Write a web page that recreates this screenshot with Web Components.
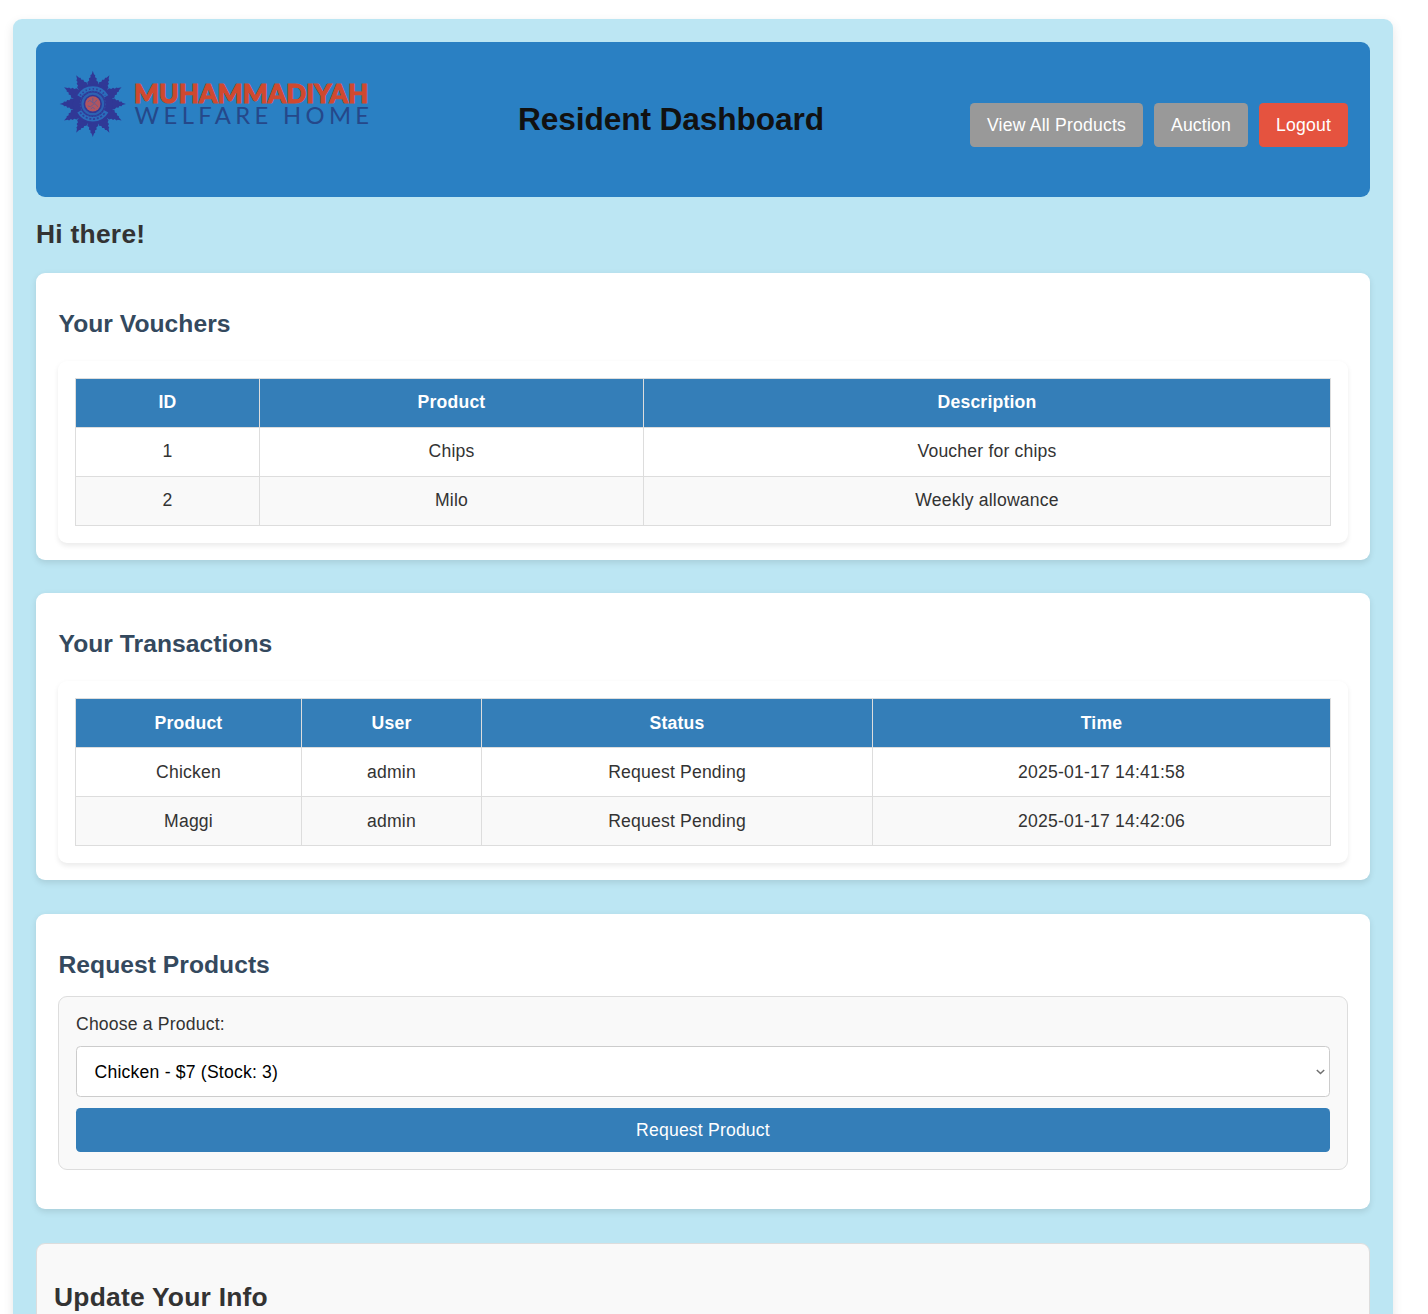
<!DOCTYPE html>
<html lang="en">
<head>
<meta charset="utf-8">
<title>Resident Dashboard</title>
<style>
html{overflow:hidden}
body{margin:0;padding:19px 35px 0 13px;background:#fff;color:#333;font:17.6px/1.15 "Liberation Sans",Arial,sans-serif;height:1314px;box-sizing:border-box;overflow:hidden}
</style>
</head>
<body>
<resident-dashboard></resident-dashboard>
<script>
function define(name, html, setup) {
  customElements.define(name, class extends HTMLElement {
    connectedCallback() {
      if (this.shadowRoot) return;
      this.attachShadow({ mode: 'open' }).innerHTML = html;
      if (setup) setup(this, this.shadowRoot);
    }
  });
}

define('brand-logo', `
<style>:host{display:block;width:314px;height:110px}svg{display:block}</style>
<svg width="314" height="110" viewBox="58 65 314 110" role="img">
  <g transform="translate(92.8 103.9)">
    <g class="rays" fill="#303896"></g>
    <circle r="20" fill="#303896"/>
    <g fill="none" stroke="#2b6dbb">
      <path d="M-13.5 -7.5A15.5 15.5 0 0 1 13.5 -7.5" stroke-width="4.6"/>
      <path d="M-13.5 7.5A15.5 15.5 0 0 0 13.5 7.5" stroke-width="4.6"/>
      <circle r="10.3" stroke="#2d62b2" stroke-width="2.2"/>
      <circle r="12.6" stroke="#2f55a8" stroke-width="1" stroke-dasharray="1.5 1.5"/>
    </g>
    <g fill="none" stroke="#303f9c" stroke-width="1.7">
      <path d="M-12.5 -8.5A15.1 15.1 0 0 1 12.5 -8.5" stroke-dasharray="1.4 2.2"/>
      <path d="M-12.5 8.5A15.1 15.1 0 0 0 12.5 8.5" stroke-dasharray="2 1.7"/>
    </g>
    <circle r="7.6" fill="#b05560"/>
    <path d="M-5 -2q2 -3 4 0t5 -2M-5 2q3 2 5 -1t5 2M-2 5q2 -3 4 0M0 -6v4" fill="none" stroke="#665c91" stroke-width="1"/>
  </g>
  <text x="134" y="102.6" textLength="234.5" lengthAdjust="spacingAndGlyphs" font-family="Lato" font-weight="900" font-size="26" fill="#d0492f" stroke="#d0492f" stroke-width="1.1">MUHAMMADIYAH</text>
  <text x="134.6" y="124.2" textLength="234.5" lengthAdjust="spacing" font-family="Lato" font-size="23.8" fill="#25488a">WELFARE HOME</text>
</svg>`, (el, root) => {
  let rays = '';
  for (let a = 0; a < 360; a += 30)
    rays += `<path transform="rotate(${a})" d="M0 -33.2L1.2 -29.5L2.4 -28.8L2.2 -26.6L3.9 -25.6L3.6 -23.4L5.4 -22L5 -18H-5L-5.4 -22L-3.6 -23.4L-3.9 -25.6L-2.2 -26.6L-2.4 -28.8L-1.2 -29.5Z"/>`;
  root.querySelector('.rays').innerHTML = rays;
});

define('action-button', `
<style>
:host{display:block}
button{display:block;width:100%;height:44px;margin:0;padding:0;border:0;border-radius:4.4px;background:var(--button-bg,#999);color:#fff;font:17.6px "Liberation Sans",Arial,sans-serif;letter-spacing:var(--button-spacing,.2px);white-space:nowrap}
</style><button><slot></slot></button>`);

define('page-header', `
<style>
:host{display:flex;align-items:center;justify-content:space-between;box-sizing:border-box;height:155px;padding:0 22px;border-radius:9px;background:#2a80c3}
h1{margin:0 0 2px;font-size:31.68px;line-height:36px;color:#111;letter-spacing:-.1px}
nav{display:flex;gap:11px;margin-top:11px}
.logout{--button-bg:#e5533f}
</style>
<brand-logo></brand-logo>
<h1>Resident Dashboard</h1>
<nav><action-button style="width:173px">View All Products</action-button><action-button style="width:94px">Auction</action-button><action-button class="logout" style="width:89px">Logout</action-button></nav>`);

define('section-card', `
<style>
:host{display:block;box-sizing:border-box;padding:37px 22px 0;border-radius:9px;background:#fff;box-shadow:0 2.2px 6.6px rgba(0,0,0,.1)}
h2{margin:0;padding-left:.5px;font-size:24.64px;line-height:28px;letter-spacing:.04px;color:#34495e}
</style><h2></h2><slot></slot>`, (el, root) => { root.querySelector('h2').textContent = el.getAttribute('heading'); });

define('data-table', `
<style>
:host{display:block;margin-top:23px;box-sizing:border-box;height:182px;padding:17px;border-radius:9px;box-shadow:0 2.2px 5.5px rgba(0,0,0,.08)}
table{width:1256px;table-layout:fixed;border-collapse:collapse}
th,td{box-sizing:border-box;height:49px;padding:var(--cell-top,0) 0 var(--cell-bottom,2px);border:1px solid #ddd;text-align:center;letter-spacing:.18px}
th{background:#347eb8;color:#fff;letter-spacing:.2px}
tbody tr:nth-child(even){background:#f9f9f9}
</style><table><colgroup></colgroup><thead></thead><tbody></tbody></table>`, (el, root) => {
  const rows = JSON.parse(el.getAttribute('rows'));
  const line = (r, tag) => '<tr>' + r.map(c => `<${tag}>${c}</${tag}>`).join('') + '</tr>';
  root.querySelector('colgroup').innerHTML = el.getAttribute('widths').split(' ').map(w => `<col style="width:${w}px">`).join('');
  root.querySelector('thead').innerHTML = line(rows[0], 'th');
  root.querySelector('tbody').innerHTML = rows.slice(1).map(r => line(r, 'td')).join('');
});

define('request-form', `
<style>
:host{display:flex;flex-direction:column;box-sizing:border-box;height:174px;margin-top:17px;padding:17px;border:1px solid #ddd;border-radius:9px;background:#f9f9f9}
label{line-height:20px;letter-spacing:.18px}
.select{display:flex;align-items:center;justify-content:space-between;box-sizing:border-box;height:51px;margin:12px 0 11px;padding:1px 4px 0 17.6px;border:1px solid #ccc;border-radius:4.4px;background:#fff;color:#000;letter-spacing:.2px}
svg{display:block;margin-bottom:1px}
action-button{--button-bg:#347eb8;--button-spacing:.18px}
</style>
<label>Choose a Product:</label>
<div class="select" role="combobox" aria-expanded="false"><span>Chicken - $7 (Stock: 3)</span><svg width="9" height="6" viewBox="0 0 9 6"><path d="M.8 1L4.5 4.5L8.2 1" fill="none" stroke="#707070" stroke-width="1.5"/></svg></div>
<action-button>Request Product</action-button>`);

define('info-form', `
<style>
:host{display:block;height:300px;padding:38px 17px 0;border:1px solid #ddd;border-radius:9px;background:#f9f9f9}
h2{margin:0;font-size:26.4px;line-height:30px;letter-spacing:.24px}
</style><h2>Update Your Info</h2>`);

define('resident-dashboard', `
<style>
:host{display:block;box-sizing:border-box;width:1380px;height:1600px;padding:23px;border-radius:9px;background:#bce6f3;box-shadow:0 4.4px 11px rgba(0,0,0,.1)}
.greeting{margin:22px 0 24px;font-size:26.4px;line-height:30px;letter-spacing:.26px}
section-card{height:287px;margin-bottom:33px}
section-card.second{margin-bottom:34px;--cell-top:1px;--cell-bottom:1px}
section-card.request{height:295px;margin-bottom:34px}
</style>
<page-header></page-header>
<h2 class="greeting">Hi there!</h2>
<section-card heading="Your Vouchers"><data-table widths="184 384 687" rows='[["ID","Product","Description"],["1","Chips","Voucher for chips"],["2","Milo","Weekly allowance"]]'></data-table></section-card>
<section-card class="second" heading="Your Transactions"><data-table widths="226 180 391 458" rows='[["Product","User","Status","Time"],["Chicken","admin","Request Pending","2025-01-17 14:41:58"],["Maggi","admin","Request Pending","2025-01-17 14:42:06"]]'></data-table></section-card>
<section-card class="request" heading="Request Products"><request-form></request-form></section-card>
<info-form></info-form>`);
</script>
</body>
</html>
